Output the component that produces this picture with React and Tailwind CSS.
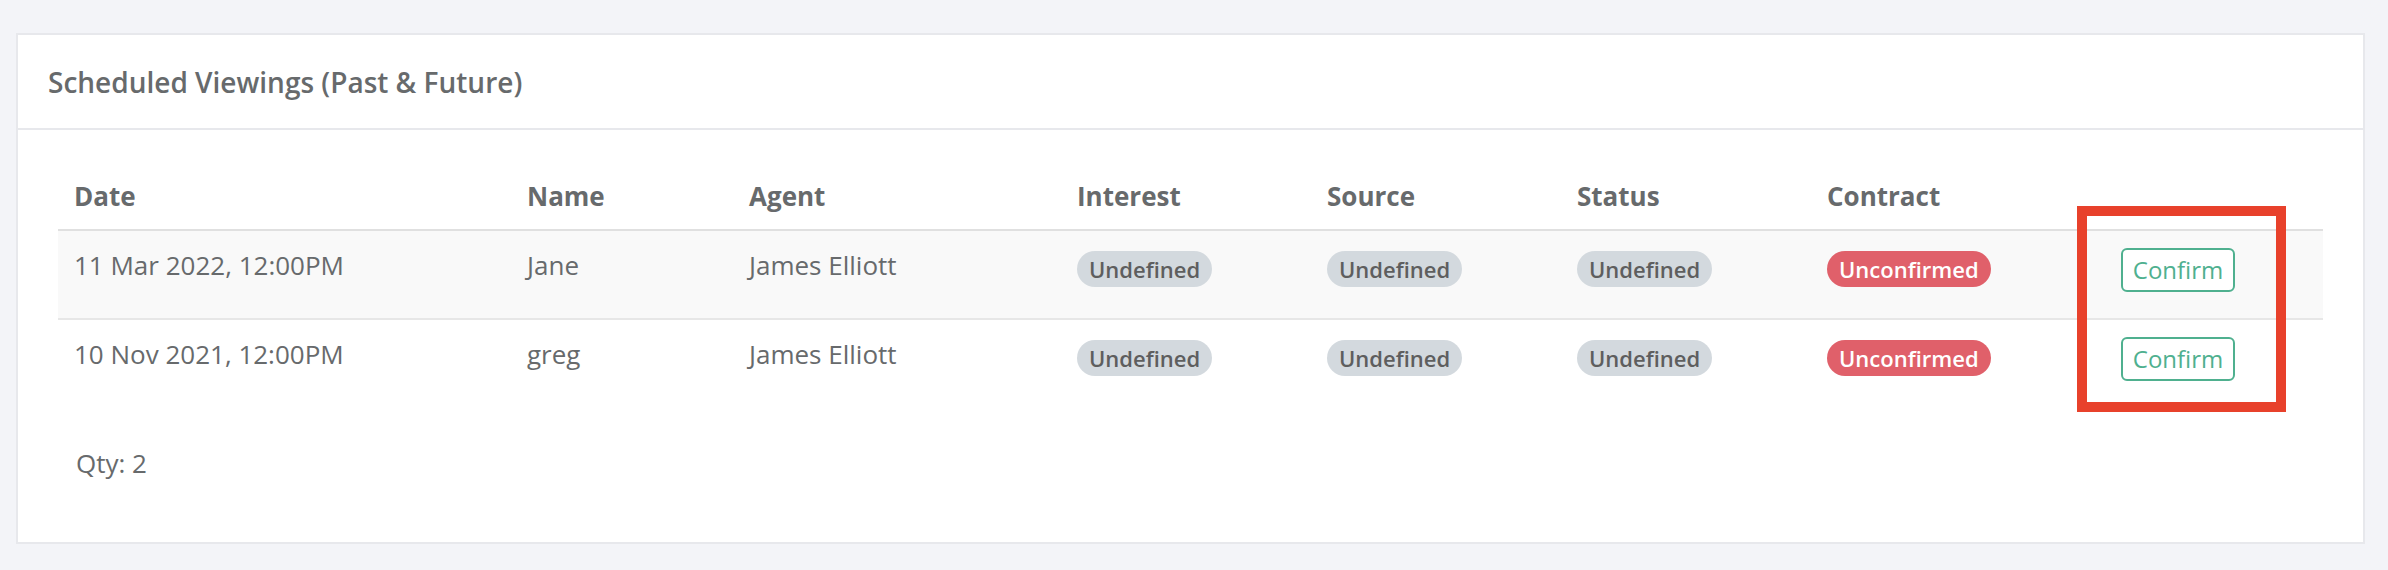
import React from "react";

const rows = [
  { date: "11 Mar 2022, 12:00PM", name: "Jane", agent: "James Elliott", striped: true },
  { date: "10 Nov 2021, 12:00PM", name: "greg", agent: "James Elliott", striped: false },
];

const cols = "grid grid-cols-[453px_222px_328px_250px_250px_250px_294px_218px]";

function Gray() {
  return (
    <span className="mt-[4px] inline-flex h-[36px] items-center rounded-full bg-[#d3d9de] px-[12px] text-[22px] font-semibold text-[#5e5e5e]">
      Undefined
    </span>
  );
}

export default function App() {
  return (
    <div className="min-h-[570px] bg-[#f3f4f8] pl-[16px] pr-[23px] pt-[33px] pb-[25px] font-['Open_Sans',sans-serif] text-[#676a6c]">
      <div className="relative border-2 border-[#e7e8ec] bg-white">
        <div className="flex h-[95px] items-center border-b-2 border-[#e7e8ec] pl-[30px]">
          <h5 className="text-[28px] font-semibold text-[#676a6c]">Scheduled Viewings (Past &amp; Future)</h5>
        </div>
        <div className="px-[40px] pt-[46px] pb-[60px]">
          <div className={`${cols} border-b-2 border-[#e0e0e0] pb-[13px] text-[26px] font-bold leading-[40px] text-[#676a6c]`}>
            <div className="pl-[16px]">Date</div>
            <div className="pl-[16px]">Name</div>
            <div className="pl-[16px]">Agent</div>
            <div className="pl-[16px]">Interest</div>
            <div className="pl-[16px]">Source</div>
            <div className="pl-[16px]">Status</div>
            <div className="pl-[16px]">Contract</div>
            <div className="pl-[16px]"></div>
          </div>
          {rows.map((r, i) => (
            <div
              key={i}
              className={`${cols} text-[26px] leading-[37px] ${
                r.striped ? "h-[89px] border-b-2 border-[#e7e7e7] bg-[#f9f9f9]" : "h-[88px]"
              }`}
            >
              <div className="pl-[16px] pt-[16px]">{r.date}</div>
              <div className="pl-[16px] pt-[16px]">{r.name}</div>
              <div className="pl-[16px] pt-[16px]">{r.agent}</div>
              <div className="flex items-start pl-[16px] pt-[16px]"><Gray /></div>
              <div className="flex items-start pl-[16px] pt-[16px]"><Gray /></div>
              <div className="flex items-start pl-[16px] pt-[16px]"><Gray /></div>
              <div className="flex items-start pl-[16px] pt-[16px]">
                <span className="mt-[4px] inline-flex h-[36px] items-center rounded-full bg-[#e0606a] px-[12px] text-[22px] font-semibold text-white">
                  Unconfirmed
                </span>
              </div>
              <div className="flex items-start pl-[16px] pt-[16px]">
                <button className="mt-[1px] flex h-[44px] w-[114px] items-center justify-center rounded-[6px] border-2 border-[#4fb08f] bg-white text-[24px] leading-none text-[#4fb08f]">
                  Confirm
                </button>
              </div>
            </div>
          ))}
          <div className="mt-[37px] pl-[18px] text-[26px] leading-[37px]">Qty: 2</div>
        </div>
        <div className="pointer-events-none absolute left-[2059px] top-[171px] h-[206px] w-[209px] border-[10px] border-[#e8412b]"></div>
      </div>
    </div>
  );
}
